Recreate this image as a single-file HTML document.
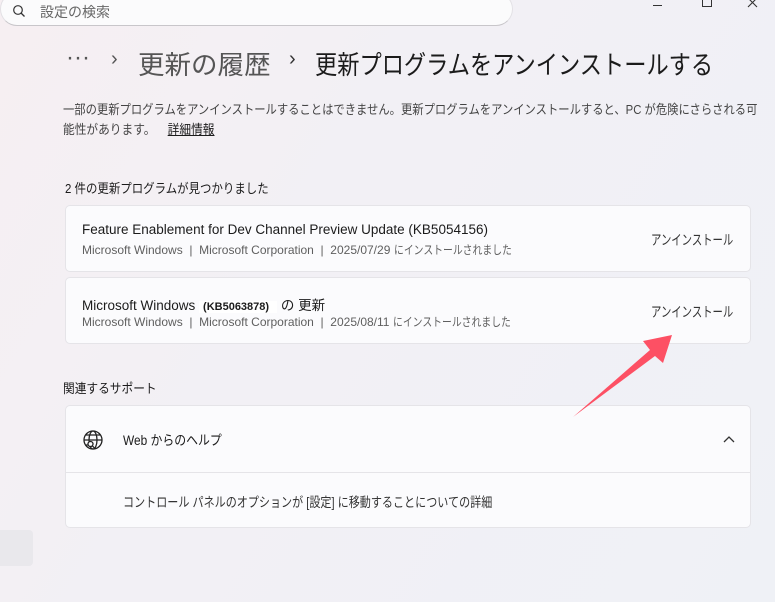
<!DOCTYPE html>
<html><head><meta charset="utf-8"><style>
*{margin:0;padding:0;box-sizing:border-box}
body{width:775px;height:602px;overflow:hidden;font-family:"Liberation Sans","Noto Sans CJK JP",sans-serif;background:linear-gradient(120deg,#f6eff2 0%,#f2f0f5 40%,#eff1f6 100%);position:relative;color:#1b1b1b}
.abs{position:absolute;white-space:nowrap}
.c{display:inline-block;transform-origin:left center;white-space:nowrap}
.search{left:0;top:-8px;width:513px;height:34px;background:#fbfbfc;border:1px solid #e3e1e5;border-radius:17px;border-bottom-color:#c8c6ca}
.card{position:absolute;left:65px;width:686px;background:#fbfbfd;border:1px solid #e5e4e8;border-radius:5px}
.t{font-size:13.5px;color:#1b1b1b}
.s{font-size:12px;color:#5f5f5f}
.btn{position:absolute;left:585px;font-size:14px;color:#333}
</style></head><body>
<div class="abs search"></div>
<svg class="abs" style="left:12px;top:4px" width="14" height="14" viewBox="0 0 14 14"><circle cx="6" cy="6" r="4.3" fill="none" stroke="#333" stroke-width="1.2"/><path d="M9 9l3.5 3.5" stroke="#333" stroke-width="1.3"/></svg>
<div class="abs" style="left:40px;top:2px;font-size:14px;color:#666">設定の検索</div>
<div class="abs" style="left:653px;top:5px;width:9px;height:1px;background:#333"></div>
<div class="abs" style="left:702px;top:-3px;width:10px;height:10px;border:1px solid #333"></div>
<svg class="abs" style="left:747px;top:-3px" width="11" height="11" viewBox="0 0 11 11"><path d="M1 1l9 9M10 1l-9 9" stroke="#333" stroke-width="1.1"/></svg>
<div class="abs" style="left:66px;top:44px;font-size:24px;color:#555">···</div>
<div class="abs" style="left:111px;top:48px;font-size:20px;color:#555">›</div>
<div class="abs" style="left:138px;top:45px;font-size:26px;color:#555"><span class="c" style="transform:scaleX(1.02)">更新の履歴</span></div>
<div class="abs" style="left:289px;top:48px;font-size:20px;color:#333">›</div>
<div class="abs" style="left:315px;top:45px;font-size:26px;color:#1b1b1b"><span class="c" style="transform:scaleX(0.855)">更新プログラムをアンインストールする</span></div>
<div class="abs" style="left:63px;top:100px;font-size:13px;line-height:20px;color:#444"><span class="c" style="transform:scaleX(0.87)">一部の更新プログラムをアンインストールすることはできません。更新プログラムをアンインストールすると、PC が危険にさらされる可</span></div>
<div class="abs" style="left:63px;top:120px;font-size:13px;line-height:20px;color:#444"><span class="c" style="transform:scaleX(0.9)">能性があります。 <span style="color:#1b1b1b;text-decoration:underline;margin-left:10px">詳細情報</span></span></div>
<div class="abs" style="left:65px;top:178px;font-size:13px"><span class="c" style="transform:scaleX(0.88)">2 件の更新プログラムが見つかりました</span></div>
<div class="card" style="top:205px;height:67px">
<div class="abs t" style="left:16px;top:16px">Feature Enablement for Dev Channel Preview Update (KB5054156)</div>
<div class="abs s" style="left:16px;top:35px">Microsoft Windows &nbsp;| &nbsp;Microsoft Corporation &nbsp;| &nbsp;2025/07/29 <span class="c" style="transform:scaleX(0.82)">にインストールされました</span></div>
<div class="btn" style="top:24px"><span class="c" style="transform:scaleX(0.74)">アンインストール</span></div></div>
<div class="card" style="top:277px;height:67px">
<div class="abs t" style="left:16px;top:16px">Microsoft Windows <span style="font-size:11px;font-weight:bold;background:#fff;padding:0 8px 0 4px">(KB5063878)</span> の 更新</div>
<div class="abs s" style="left:16px;top:35px">Microsoft Windows &nbsp;| &nbsp;Microsoft Corporation &nbsp;| &nbsp;2025/08/11 <span class="c" style="transform:scaleX(0.82)">にインストールされました</span></div>
<div class="btn" style="top:24px"><span class="c" style="transform:scaleX(0.74)">アンインストール</span></div></div>
<div class="abs" style="left:63px;top:378px;font-size:13px"><span class="c" style="transform:scaleX(0.9)">関連するサポート</span></div>
<div class="card" style="top:405px;height:123px">
<svg class="abs" style="left:16px;top:23px" width="22" height="22" viewBox="0 0 22 22" fill="none" stroke="#222" stroke-width="1.3"><circle cx="11" cy="11" r="9"/><ellipse cx="11" cy="11" rx="4" ry="9"/><path d="M2 11h18M4 6h14M4 16h6"/><circle cx="8.5" cy="15" r="2.5" fill="#fbfbfd"/><path d="M10.3 16.8l2 2"/></svg>
<div class="abs t" style="left:57px;top:23px"><span class="c" style="transform:scaleX(0.88)">Web からのヘルプ</span></div>
<svg class="abs" style="left:657px;top:29px" width="12" height="8" viewBox="0 0 12 8"><path d="M1 7l5-5 5 5" fill="none" stroke="#333" stroke-width="1.3"/></svg>
<div class="abs" style="left:0;top:66px;width:684px;height:1px;background:#e5e4e8"></div>
<div class="abs t" style="left:57px;top:85px;color:#333"><span class="c" style="transform:scaleX(0.82)">コントロール パネルのオプションが [設定] に移動することについての詳細</span></div></div>
<div class="abs" style="left:-5px;top:530px;width:38px;height:36px;background:#e9e8ec;border-radius:4px"></div>
<svg class="abs" style="left:0;top:0" width="775" height="602"><polygon points="672,335 643,341 650,350 573,417 655,356 663,363" fill="#fd5064"/></svg>
</body></html>
